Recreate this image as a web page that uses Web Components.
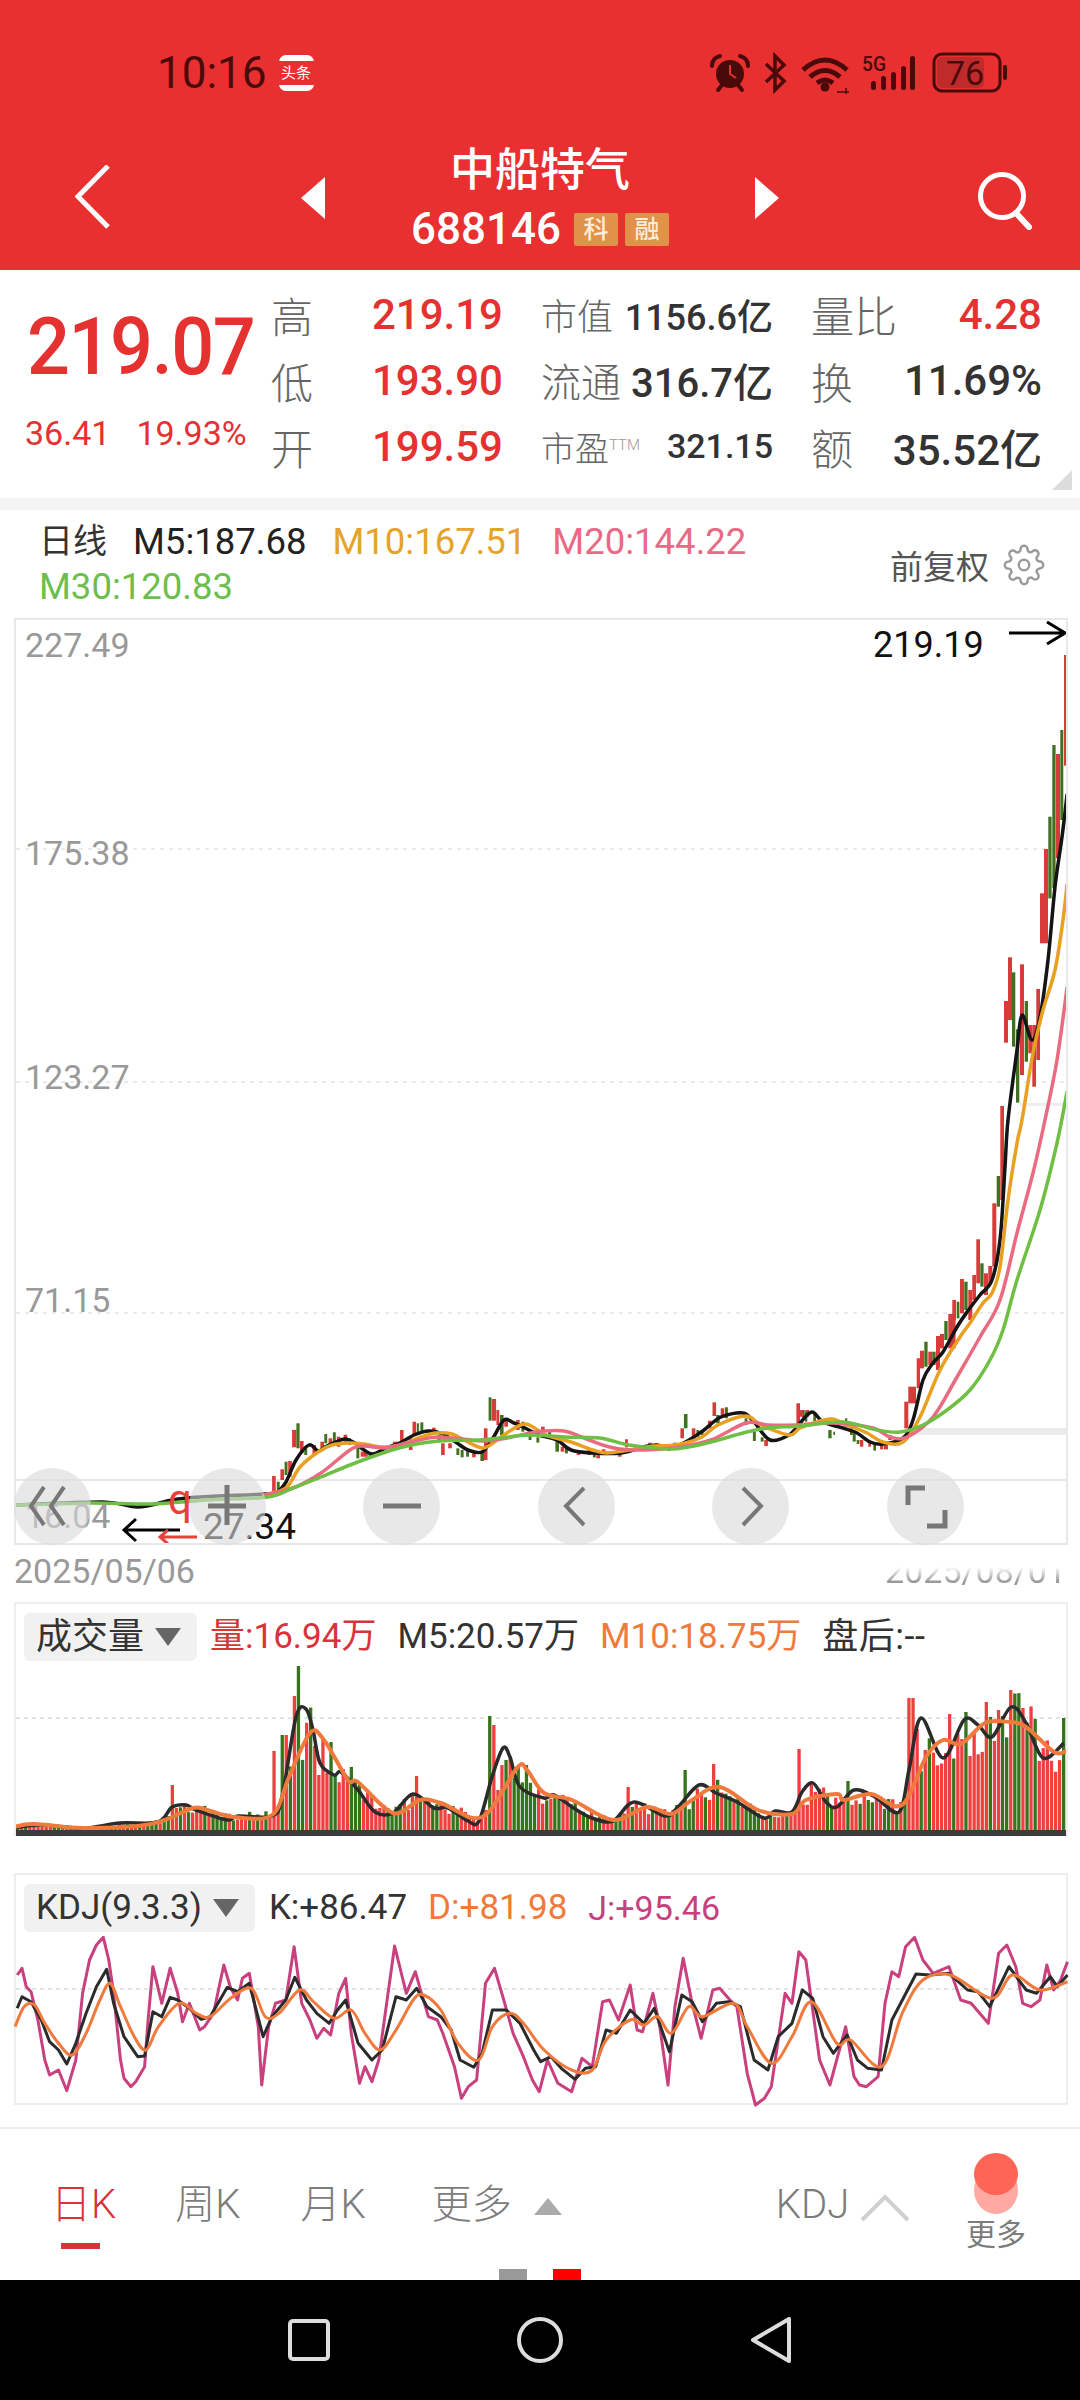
<!DOCTYPE html>
<html lang="zh">
<head>
<meta charset="utf-8">
<title>中船特气</title>
<style>
  html, body { margin: 0; padding: 0; background: #fff; }
  body { width: 1080px; height: 2400px; overflow: hidden; font-family: Roboto, "Noto Sans CJK SC", sans-serif; }
</style>
</head>
<body>
  <stock-header></stock-header>
  <quote-panel></quote-panel>
  <ma-legend></ma-legend>
  <kline-chart></kline-chart>
  <date-axis></date-axis>
  <vol-panel></vol-panel>
  <kdj-panel></kdj-panel>
  <period-tabs></period-tabs>
  <nav-bar></nav-bar>

<script>
// catmull-rom through the points, so the averages don't look like polylines
function curve(pts) {
  let d = `M${pts[0][0]} ${pts[0][1]}`;
  for (let i = 0; i < pts.length - 1; i++) {
    const p0 = pts[i - 1] || pts[i], p1 = pts[i], p2 = pts[i + 1], p3 = pts[i + 2] || p2;
    const c1x = p1[0] + (p2[0] - p0[0]) / 6, c1y = p1[1] + (p2[1] - p0[1]) / 6;
    const c2x = p2[0] - (p3[0] - p1[0]) / 6, c2y = p2[1] - (p3[1] - p1[1]) / 6;
    d += `C${c1x.toFixed(1)} ${c1y.toFixed(1)} ${c2x.toFixed(1)} ${c2y.toFixed(1)} ${p2[0].toFixed(1)} ${p2[1].toFixed(1)}`;
  }
  return d;
}
function yAt(pts, x) {
  for (let i = 0; i < pts.length - 1; i++) {
    if (x <= pts[i + 1][0]) {
      const t = (x - pts[i][0]) / (pts[i + 1][0] - pts[i][0]);
      return pts[i][1] + (pts[i + 1][1] - pts[i][1]) * Math.max(0, t);
    }
  }
  return pts[pts.length - 1][1];
}
function rnd(i) { const s = Math.sin(i * 12.9898 + 4.1) * 43758.5453; return s - Math.floor(s); }

class StockHeader extends HTMLElement {
  constructor() { super(); this.attachShadow({ mode: 'open' }); }
  connectedCallback() {
    this.shadowRoot.innerHTML = `
      <style>
        :host { display: block; height: 270px; background: #e83030; color: #fff; }
        .status { height: 146px; display: flex; align-items: center; padding-left: 157px; box-sizing: border-box; }
        .time { font-size: 44px; color: #4a0a0a; line-height: 50px; }
        .tt { margin-left: 12px; width: 35px; height: 36px; background: #fff; border-radius: 7px; display: flex; align-items: center; }
        .tt span { display: block; width: 100%; height: 24px; background: #e83030; color: #fff; font-size: 15px; line-height: 24px; text-align: center; white-space: nowrap; }
        .sys { margin-left: auto; margin-right: 70px; display: block; }
        .bar { height: 124px; display: grid; grid-template-columns: 1fr 481px 1fr; }
        .left { padding: 19px 0 0 75px; }
        .right { padding: 26px 0 0 0; display: flex; justify-content: flex-end; }
        .mid { display: flex; justify-content: space-between; align-items: flex-start; }
        .mid svg { margin-top: 31px; }
        .stack { display: flex; flex-direction: column; align-items: center; }
        .name { font-size: 45px; font-weight: 500; line-height: 52px; margin-top: -1px; }
        .code { display: flex; align-items: center; margin-top: 8px; height: 48px; font-size: 44px; font-weight: 500; }
        .tag { width: 44px; height: 33px; margin-left: 7px; background: #e09248; color: #ffecd8; font-size: 25px; line-height: 33px; text-align: center; border-radius: 2px; }
        .tag:first-of-type { margin-left: 13px; }
      </style>
      <div class="status">
        <span class="time">10:16</span>
        <span class="tt"><span>头条</span></span>
        <svg class="sys" width="305" height="50" viewBox="703 48 305 50" fill="none" stroke="#4a0a0a">
          <circle cx="728" cy="74" r="14" fill="#4a0a0a" stroke="none"/>
          <path d="M728 65v9l6 4" stroke="#e83030" stroke-width="2"/>
          <path d="M710 66q0-8 8-10M746 66q0-8-8-10" stroke-width="4" stroke-linecap="round"/>
          <path d="M716 90l4-5M740 90l-4-5" stroke-width="4" stroke-linecap="round"/>
          <path d="M764 64L782 81L773 90V56L782 65L764 82" stroke-width="3.500"/>
          <path d="M801 70q22-20 44 0M808 77q15-13 30 0" stroke-width="5"/>
          <path d="M815 83q8-6 16 0" stroke-width="5"/>
          <circle cx="823" cy="87" r="4.500" fill="#4a0a0a" stroke="none"/>
          <path d="M835 92h12M844 88v6" stroke-width="1.500"/>
          <text x="860" y="71" font-size="21" font-weight="500" fill="#4a0a0a" stroke="none" textLength="24" lengthAdjust="spacingAndGlyphs">5G</text>
          <g fill="#4a0a0a" stroke="none">
            <rect x="869" y="81" width="5" height="9" rx="2.500"/><rect x="879" y="76" width="5" height="14" rx="2.500"/>
            <rect x="889" y="72" width="5" height="18" rx="2.500"/><rect x="899" y="66" width="5" height="24" rx="2.500"/>
            <rect x="908" y="56" width="5" height="34" rx="2.500"/>
          </g>
          <rect x="932" y="54" width="66" height="37" rx="8" stroke-width="3"/>
          <rect x="935" y="57" width="47" height="31" rx="5" fill="#bf2a2a" stroke="none"/>
          <rect x="1001" y="65" width="4" height="15" rx="2" fill="#4a0a0a" stroke="none"/>
          <text x="963" y="85" font-size="34" text-anchor="middle" fill="#4a0a0a" stroke="none">76</text>
        </svg>
      </div>
      <div class="bar">
        <div class="left">
          <svg width="36" height="64" viewBox="0 0 36 64" fill="none" stroke="#fff" stroke-width="5"><path d="M33 1L3 31.500L33 62"/></svg>
        </div>
        <div class="mid">
          <svg width="26" height="42" viewBox="0 0 26 42" fill="#fff"><path d="M25 0V42L1 21Z"/></svg>
          <div class="stack">
            <div class="name">中船特气</div>
            <div class="code">688146<span class="tag">科</span><span class="tag">融</span></div>
          </div>
          <svg width="26" height="42" viewBox="0 0 26 42" fill="#fff"><path d="M1 0V42L25 21Z"/></svg>
        </div>
        <div class="right">
          <svg style="margin-right:48px" width="54" height="58" viewBox="0 0 54 58" fill="none" stroke="#fff" stroke-width="5"><circle cx="24" cy="24" r="21.500"/><path d="M38 41L51 55" stroke-linecap="round" stroke-width="6"/></svg>
        </div>
      </div>`;
  }
}

class QuoteCell extends HTMLElement {
  constructor() { super(); this.attachShadow({ mode: 'open' }); }
  connectedCallback() {
    this.shadowRoot.innerHTML = `
      <style>
        :host { display: flex; justify-content: space-between; align-items: center; height: 66px; white-space: nowrap; }
        .lab { color: #666; font-weight: 300; margin-left: -1px; }
        .val { font-weight: 500; color: #333; }
        :host([up]) .val { color: #e5312f; }
      </style>
      <span class="lab"><slot name="label"></slot></span>
      <span class="val"><slot></slot></span>`;
  }
}

class QuotePanel extends HTMLElement {
  constructor() { super(); this.attachShadow({ mode: 'open' }); }
  connectedCallback() {
    this.shadowRoot.innerHTML = `
      <style>
        :host { display: flex; position: relative; box-sizing: border-box; height: 240px; border-bottom: 12px solid #f4f4f4; padding-top: 14px; }
        .price { width: 272px; color: #e5312f; padding-left: 25px; box-sizing: border-box; }
        .big { font-size: 80px; font-weight: 500; line-height: 90px; margin: 18px 0 0 2px; letter-spacing: -1.500px; transform: scaleX(.945); transform-origin: left center; }
        .chg { display: flex; gap: 26px; font-size: 34px; line-height: 44px; margin-top: 19px; }
        .grid { display: grid; grid-template-columns: 231px 231px 230px; grid-auto-rows: 66px; align-content: start; column-gap: 39px; font-size: 42px; margin-top: -3px; }
        .corner { position: absolute; right: 8px; bottom: 8px; width: 0; height: 0; border-left: 20px solid transparent; border-bottom: 20px solid #dcdcdc; }
        sup { font-size: 15px; color: #999; vertical-align: 11px; line-height: 0; }
      </style>
      <div class="price">
        <div class="big">219.07</div>
        <div class="chg"><span>36.41</span><span>19.93%</span></div>
      </div>
      <div class="grid">
        <quote-cell up><span slot="label">高</span>219.19</quote-cell>
        <quote-cell style="font-size:36px"><span slot="label">市值</span>1156.6亿</quote-cell>
        <quote-cell up><span slot="label" style="font-size:43px">量比</span>4.28</quote-cell>
        <quote-cell up><span slot="label">低</span>193.90</quote-cell>
        <quote-cell style="font-size:40px"><span slot="label">流通</span>316.7亿</quote-cell>
        <quote-cell><span slot="label">换</span>11.69%</quote-cell>
        <quote-cell up><span slot="label">开</span>199.59</quote-cell>
        <quote-cell style="font-size:34px"><span slot="label">市盈<sup>TTM</sup></span>321.15</quote-cell>
        <quote-cell><span slot="label">额</span>35.52亿</quote-cell>
      </div>
      <span class="corner"></span>`;
  }
}

class MaLegend extends HTMLElement {
  constructor() { super(); this.attachShadow({ mode: 'open' }); }
  connectedCallback() {
    this.shadowRoot.innerHTML = `
      <style>
        :host { display: flex; justify-content: space-between; align-items: center; height: 108px; box-sizing: border-box; padding: 0 35px 0 39px; font-size: 36.500px; }
        .items { width: 770px; display: flex; flex-wrap: wrap; column-gap: 26px; line-height: 45px; color: #222; }
        .day { font-size: 34px; color: #333; }
        .m10 { color: #e5a32a; } .m20 { color: #e86a85; } .m30 { color: #6cbf4c; }
        .adj { display: flex; align-items: center; gap: 14px; font-size: 33px; color: #555; margin-top: 2px; }
      </style>
      <div class="items">
        <span class="day">日线</span><span>M5:187.68</span><span class="m10">M10:167.51</span><span class="m20">M20:144.22</span><span class="m30">M30:120.83</span>
      </div>
      <div class="adj">
        <span>前复权</span>
        <svg width="42" height="42" viewBox="0 0 24 24" fill="none" stroke="#9a9a9a" stroke-width="1.400"><circle cx="12" cy="12" r="3"/><path d="M19.400 15a1.650 1.650 0 0 0 .33 1.820l.06.06a2 2 0 0 1 0 2.830 2 2 0 0 1-2.830 0l-.06-.06a1.650 1.650 0 0 0-1.820-.33 1.650 1.650 0 0 0-1 1.510V21a2 2 0 0 1-2 2 2 2 0 0 1-2-2v-.09A1.650 1.650 0 0 0 9 19.400a1.650 1.650 0 0 0-1.820.33l-.06.06a2 2 0 0 1-2.830 0 2 2 0 0 1 0-2.830l.06-.06a1.650 1.650 0 0 0 .33-1.820 1.650 1.650 0 0 0-1.510-1H3a2 2 0 0 1-2-2 2 2 0 0 1 2-2h.09A1.650 1.650 0 0 0 4.600 9a1.650 1.650 0 0 0-.33-1.820l-.06-.06a2 2 0 0 1 0-2.830 2 2 0 0 1 2.830 0l.06.06a1.650 1.650 0 0 0 1.820.33H9a1.650 1.650 0 0 0 1-1.510V3a2 2 0 0 1 2-2 2 2 0 0 1 2 2v.09a1.650 1.650 0 0 0 1 1.510 1.650 1.650 0 0 0 1.820-.33l.06-.06a2 2 0 0 1 2.830 0 2 2 0 0 1 0 2.830l-.06.06a1.650 1.650 0 0 0-.33 1.820V9a1.650 1.650 0 0 0 1.510 1H21a2 2 0 0 1 2 2 2 2 0 0 1-2 2h-.09a1.650 1.650 0 0 0-1.510 1z"/></svg>
      </div>`;
  }
}

// moving averages, in page pixels
const M5 = [[14,1505],[103,1502],[138,1507],[172,1500],[200,1497],[265,1494],[277,1492],[286,1482],[296,1460],[309,1445],[318,1451],[325,1447],[336,1442],[345,1439],[355,1443],[364,1450],[373,1454],[386,1448],[400,1443],[414,1435],[429,1431],[443,1434],[457,1443],[468,1450],[482,1452],[493,1438],[504,1420],[514,1423],[525,1428],[539,1435],[557,1440],[571,1450],[593,1453],[621,1453],[643,1447],[657,1445],[671,1448],[689,1440],[704,1430],[721,1417],[743,1413],[754,1422],[770,1440],[789,1435],[800,1423],[812,1412],[823,1422],[843,1428],[857,1433],[870,1442],[883,1444],[903,1438],[913,1420],[923,1380],[933,1363],[943,1352],[957,1327],[967,1312],[980,1295],[992,1280],[1000,1240],[1005,1167],[1008,1120],[1017,1050],[1022,1015],[1032,1040],[1040,1017],[1048,960],[1055,887],[1062,837],[1067,795]];
const M10 = [[264,1495],[286,1488],[300,1467],[318,1452],[332,1445],[350,1443],[364,1444],[382,1447],[400,1445],[421,1437],[436,1433],[452,1434],[464,1440],[482,1448],[493,1443],[504,1435],[525,1424],[546,1435],[571,1442],[593,1450],[607,1453],[629,1450],[654,1446],[675,1445],[700,1438],[718,1425],[746,1416],[761,1425],[789,1435],[800,1428],[817,1422],[832,1419],[847,1425],[867,1433],[883,1442],[903,1442],[920,1417],[940,1370],[960,1337],[970,1323],[983,1303],[992,1293],[1000,1267],[1008,1200],[1017,1143],[1022,1120],[1033,1053],[1043,1010],[1055,970],[1063,920],[1067,885]];
const M20 = [[264,1495],[293,1488],[321,1473],[350,1450],[364,1446],[386,1448],[411,1442],[439,1437],[482,1441],[507,1438],[536,1432],[564,1431],[589,1440],[614,1448],[643,1450],[679,1447],[711,1440],[746,1423],[768,1425],[796,1425],[833,1423],[873,1428],[890,1437],[907,1437],[933,1417],[957,1377],[980,1337],[1000,1300],[1017,1233],[1033,1173],[1045,1120],[1057,1060],[1067,988]];
const M30 = [[14,1505],[90,1503],[152,1504],[207,1500],[268,1497],[293,1488],[321,1477],[350,1465],[386,1452],[411,1445],[439,1441],[479,1440],[500,1438],[529,1435],[564,1437],[600,1438],[629,1445],[671,1449],[707,1443],[743,1433],[768,1428],[800,1426],[843,1422],[877,1430],[900,1432],[923,1425],[947,1410],[970,1390],[990,1360],[1003,1330],[1017,1280],[1040,1210],[1057,1143],[1067,1092]];

// candle bodies read off the crops: [x0, x1, y0, y1, colour]
const R = '#d93a3a', G = '#41701f';
const K_MID = [[62,72,348,395,R],[75,83,365,390,G],[85,95,328,360,R],[97,105,305,345,G],[107,117,303,350,R],[118,130,210,262,R],[130,139,190,265,G],[140,150,243,280,R],[152,160,260,285,G],[175,185,255,285,R],[197,207,245,272,R],[208,216,222,250,G],[220,230,235,260,R],[232,240,217,250,G],[243,253,230,260,R],[262,272,224,250,R],[275,283,235,255,G],[298,306,260,295,G],[310,330,275,290,R],[332,340,280,290,G],[400,420,245,265,R],[420,430,210,260,R],[445,455,235,270,R],[455,465,185,225,R],[467,473,190,220,G],[477,485,187,215,G],[510,520,203,222,R],[525,535,225,245,G],[535,545,250,285,R],[555,565,250,265,R],[578,586,265,285,G],[590,598,270,292,G],[605,613,270,290,G],[622,632,280,292,R],[645,655,275,303,G],[655,665,205,300,R],[668,676,112,182,G],[677,689,117,182,R],[690,698,150,195,R],[700,710,165,225,G],[712,722,180,200,R],[745,755,180,210,R],[760,768,185,215,G],[780,788,225,240,G],[802,810,232,248,G],[815,825,200,230,R],[835,843,215,235,G],[855,865,240,275,G],[870,880,260,275,R],[882,890,260,280,G],[915,925,270,285,R],[945,955,270,285,R],[960,968,275,292,G],[970,980,280,295,R],[985,995,268,280,R],[1030,1040,275,290,R],[1050,1058,238,262,R],[1115,1125,248,262,R],[1168,1178,258,273,G],[1185,1195,248,265,R],[1205,1215,205,235,R],[1215,1225,162,205,G],[1237,1247,205,230,R],[1250,1258,210,230,G],[1262,1270,210,225,G],[1282,1292,182,205,R],[1295,1305,127,168,R],[1305,1315,165,190,G],[1318,1328,145,172,R],[1330,1338,142,175,G],[1385,1393,175,195,G],[1408,1416,215,243,G],[1430,1438,232,245,G],[1440,1450,240,258,R],[1530,1540,130,195,R],[1545,1553,150,172,G],[1555,1565,150,170,R]];
const K_LOW = [[0,10,930,950,R],[15,22,935,965,G],[40,48,940,965,G],[85,95,990,1015,G],[100,105,995,1005,G],[135,142,955,980,G],[150,158,980,1005,G],[158,167,1000,1025,G],[170,178,1020,1032,G],[180,190,1020,1040,R],[205,213,1020,1040,R],[220,228,1030,1052,G],[240,250,1032,1048,R],[252,264,1025,1048,R],[265,275,1005,1020,R],[285,295,1015,1025,R],[313,325,905,985,R],[325,348,860,910,R],[350,360,775,865,R],[360,372,752,805,R],[373,383,725,800,G],[385,397,755,795,R],[397,407,755,795,G],[408,420,708,810,R],[420,432,702,745,R],[433,443,663,720,G],[445,467,642,745,R],[457,468,600,660,R],[470,478,605,655,G],[480,492,537,640,R],[493,503,545,630,G],[505,517,570,660,R],[517,528,525,600,R],[529,540,418,550,R],[541,551,490,560,G],[552,564,520,585,R],[565,577,498,550,R],[577,589,310,500,R],[590,600,228,320,G],[601,612,18,300,R]];
const K_TOP = [[612,624,1143,1268,R],[624,636,1012,1200,R],[636,646,1057,1280,G],[648,658,1228,1448,G],[660,672,1033,1365,R],[674,684,1143,1325,G],[685,697,1215,1300,R],[697,708,1215,1400,R],[709,720,1107,1320,R],[720,744,820,970,R],[732,744,687,830,R],[745,755,590,835,G],[757,767,375,805,G],[768,780,402,715,R],[781,790,330,600,G],[792,804,105,437,R]];

class KlineChart extends HTMLElement {
  constructor() { super(); this.attachShadow({ mode: 'open' }); }
  connectedCallback() {
    const rect = (x0, x1, y0, y1, c) => `<rect x="${x0.toFixed(1)}" y="${y0.toFixed(1)}" width="${(x1 - x0).toFixed(1)}" height="${(y1 - y0).toFixed(1)}" fill="${c}"/>`;
    const candles =
      K_MID.map(k => rect(250 + k[0] / 2.8, 250 + k[1] / 2.8, 1360 + k[2] / 3, 1360 + k[3] / 3, k[4])).join('') +
      K_LOW.map(k => rect(800 + k[0] / 3, 800 + k[1] / 3, 1100 + k[2] / 3, 1100 + k[3] / 3, k[4])).join('') +
      K_TOP.map(k => rect(800 + k[0] / 3, 800 + k[1] / 3, 620 + k[2] / 3, 620 + k[3] / 3, k[4])).join('');
    const line = (p, c) => `<path d="${curve(p)}" stroke="${c}"/>`;
    this.shadowRoot.innerHTML = `
      <style>
        :host { display: block; position: relative; box-sizing: border-box; height: 927px; margin: 0 12px 0 14px; border: 2px solid #e8e8e8; }
        svg.plot { display: block; width: 100%; height: 100%; }
        .lab { position: absolute; left: 9px; font-size: 34px; line-height: 40px; color: #999; }
        .q { position: absolute; left: 152px; top: 860px; font-size: 42px; line-height: 40px; color: #e8413a; }
        .hi { position: absolute; left: 857px; top: 3px; font-size: 36px; line-height: 44px; color: #111; }
        .lo { position: absolute; left: 187px; top: 885px; font-size: 37px; line-height: 44px; color: #111; }
        .tools { position: absolute; left: -2px; bottom: -2px; width: 950px; display: flex; justify-content: space-between; }
      </style>
      <svg class="plot" viewBox="16 620 1050 923">
        <g stroke="#e4e4e4" stroke-width="1.500" stroke-dasharray="4 5">
          <path d="M16 849H1066M16 1082H1066M16 1313H1066"/>
        </g>
        <path d="M16 1480H1066" stroke="#e8e8e8" stroke-width="2"/>
        <rect x="913" y="1428" width="153" height="7" fill="#ebebeb"/>
        <rect x="1020" y="1103" width="46" height="3" fill="#eee"/>
        ${candles}
        <g fill="none" stroke-width="3.500" stroke-linejoin="round" stroke-linecap="round">
          ${line(M5, '#141414')}${line(M10, '#e8a020')}${line(M20, '#ea6a80')}${line(M30, '#6fbf44')}
        </g>
        <g fill="none" stroke="#000" stroke-width="3">
          <path d="M1009 633H1065M1047 622L1065 633L1047 644"/>
          <path d="M180 1530H124M136 1519L124 1530L136 1541"/>
        </g>
        <path d="M197 1537H160M168 1530L160 1537L168 1544" fill="none" stroke="#e8413a" stroke-width="3"/>
      </svg>
      <span class="lab" style="top:5px">227.49</span>
      <span class="lab" style="top:213px">175.38</span>
      <span class="lab" style="top:437px">123.27</span>
      <span class="lab" style="top:660px">71.15</span>
      <span class="lab" style="top:876px">16.04</span>
      <span class="q">q</span>
      <span class="hi">219.19</span>
      <span class="lo">27.34</span>
      <div class="tools">
        <chart-tool><path d="M30 19L17 38L30 57M50 19L37 38L50 57"/></chart-tool>
        <chart-tool wide><path d="M19 38H57M38 17V57"/></chart-tool>
        <chart-tool wide><path d="M20 38H58"/></chart-tool>
        <chart-tool><path d="M46 20L28 38L46 57"/></chart-tool>
        <chart-tool><path d="M31 20L49 38L31 57"/></chart-tool>
        <chart-tool wide><path d="M21 37V20H38M58 42V58H40"/></chart-tool>
      </div>`;
  }
}

class ChartTool extends HTMLElement {
  constructor() { super(); this.attachShadow({ mode: 'open' }); }
  connectedCallback() {
    const sw = this.hasAttribute('wide') ? 5 : 4;
    this.shadowRoot.innerHTML = `
      <style>
        :host { display: block; width: 77px; height: 77px; border-radius: 50%; background: rgba(217,217,217,.6); }
        svg { display: block; }
      </style>
      <svg width="77" height="77" viewBox="0 0 77 77" fill="none" stroke="#777" stroke-width="${sw}">${this.innerHTML}</svg>`;
  }
}

class DateAxis extends HTMLElement {
  constructor() { super(); this.attachShadow({ mode: 'open' }); }
  connectedCallback() {
    this.shadowRoot.innerHTML = `
      <style>
        :host { display: flex; justify-content: space-between; height: 57px; box-sizing: border-box; padding: 4px 14px 0; font-size: 34px; line-height: 44px; color: #999; }
        .end { -webkit-mask-image: linear-gradient(to bottom, transparent 34%, #000 62%); mask-image: linear-gradient(to bottom, transparent 34%, #000 62%); }
      </style>
      <span>2025/05/06</span>
      <span class="end">2025/08/01</span>`;
  }
}

class PanelChip extends HTMLElement {
  constructor() { super(); this.attachShadow({ mode: 'open' }); }
  connectedCallback() {
    this.shadowRoot.innerHTML = `
      <style>
        :host { display: inline-flex; align-items: center; height: 48px; box-sizing: border-box; padding: 0 16px 0 12px; background: #f1f1f1; border-radius: 6px; font-size: 36px; color: #333; white-space: nowrap; }
        i { display: block; width: 0; height: 0; margin-left: 11px; border-left: 13px solid transparent; border-right: 13px solid transparent; border-top: 18px solid #666; }
      </style>
      <slot></slot><i></i>`;
  }
}

const VOL_M5 = [[14,1828],[41,1825],[83,1828],[120,1823],[158,1822],[172,1807],[186,1805],[196,1810],[227,1820],[238,1816],[272,1816],[282,1797],[296,1717],[306,1709],[313,1730],[320,1763],[334,1775],[341,1772],[358,1790],[375,1812],[393,1813],[413,1794],[434,1808],[448,1808],[468,1821],[479,1821],[492,1777],[503,1748],[510,1757],[520,1787],[544,1798],[554,1795],[572,1807],[592,1818],[613,1821],[634,1802],[665,1816],[678,1807],[699,1785],[716,1793],[737,1802],[764,1818],[775,1811],[792,1812],[802,1792],[813,1783],[826,1802],[837,1807],[854,1790],[875,1797],[899,1812],[909,1770],[921,1718],[943,1758],[964,1720],[978,1725],[992,1737],[1011,1707],[1026,1723],[1043,1758],[1064,1743]];
const VOL_M10 = [[14,1827],[34,1824],[83,1828],[138,1826],[165,1820],[193,1808],[207,1810],[234,1817],[272,1815],[289,1777],[310,1733],[324,1740],[348,1780],[358,1782],[393,1813],[420,1800],[441,1803],[482,1817],[517,1768],[527,1770],[544,1793],[572,1800],[613,1820],[647,1807],[671,1814],[692,1800],[720,1787],[758,1810],[792,1814],[806,1800],[837,1794],[844,1800],[871,1794],[902,1805],[926,1757],[943,1740],[961,1744],[985,1723],[1009,1722],[1026,1727],[1054,1752],[1066,1751]];
const VOL_SPIKES = [[298,1666,'g'],[293,1696,'r'],[274,1751,'r'],[280,1735,'g'],[286,1735,'r'],[490,1716,'g'],[494,1725,'r'],[169,1785,'r'],[413,1776,'r'],[625,1787,'r'],[797,1749,'r'],[845,1781,'g'],[713,1764,'r'],[685,1770,'g'],[908,1698,'r'],[912,1698,'r'],[916,1729,'r'],[1009,1690,'r'],[1062,1718,'g'],[950,1714,'r'],[966,1712,'g'],[995,1710,'r'],[1001,1716,'g'],[318,1775,'r'],[334,1775,'g']];

class VolPanel extends HTMLElement {
  constructor() { super(); this.attachShadow({ mode: 'open' }); }
  connectedCallback() {
    const spike = {};
    VOL_SPIKES.forEach(s => { spike[Math.round((s[0] - 16) / 4.07)] = s; });
    let bars = '';
    for (let i = 0; i < 258; i++) {
      const x = 16 + i * 4.07;
      const base = 1833 - (yAt(VOL_M5, x) + yAt(VOL_M10, x)) / 2;
      let top = 1833 - base * (0.72 + 0.55 * rnd(i));
      let red = x > 905 ? rnd(i + 500) < 0.72 : rnd(i + 500) < 0.5;
      if (spike[i]) { top = spike[i][1]; red = spike[i][2] === 'r'; }
      bars += `<rect x="${x.toFixed(1)}" y="${top.toFixed(1)}" width="3.300" height="${(1833 - top).toFixed(1)}" fill="${red ? '#f03f3f' : '#35741a'}"/>`;
    }
    this.shadowRoot.innerHTML = `
      <style>
        :host { display: block; box-sizing: border-box; height: 234px; margin: 0 12px 0 14px; border: 2px solid #eee; border-bottom: 0; }
        .head { display: flex; align-items: center; gap: 21px; height: 48px; margin-top: 9px; padding-left: 8px; font-size: 35px; line-height: 48px; color: #333; white-space: nowrap; }
        panel-chip { margin-right: -8px; }
        .up { color: #d8333a; } .m10 { color: #ef7a3c; }
        .late { font-size: 36px; letter-spacing: .5px; }
        svg { display: block; margin-top: 3px; }
      </style>
      <div class="head">
        <panel-chip>成交量</panel-chip>
        <span class="up">量:16.94万</span><span>M5:20.57万</span><span class="m10">M10:18.75万</span><span class="late">盘后:--</span>
      </div>
      <svg width="1050" height="172" viewBox="16 1664 1050 172">
        <path d="M16 1718H1066" stroke="#dcdcdc" stroke-width="1.500" stroke-dasharray="4 4"/>
        ${bars}
        <rect x="16" y="1830" width="1050" height="6" fill="#3c3c3c"/>
        <g fill="none" stroke-linejoin="round">
          <path d="${curve(VOL_M5)}" stroke="#2b2b2b" stroke-width="3.500"/>
          <path d="${curve(VOL_M10)}" stroke="#ef7a3c" stroke-width="4"/>
        </g>
      </svg>`;
  }
}

// kdj lines as read from the crop, x scaled by 1.452, y by 3
const KDJ_J = [25,345,32,325,38,380,45,395,55,480,65,600,72,645,85,630,97,692,110,600,120,400,130,300,140,255,150,232,158,300,165,400,175,600,180,655,190,680,197,665,210,620,215,480,222,320,235,430,247,325,258,400,265,485,275,430,290,510,297,500,310,460,325,315,335,385,345,420,352,355,362,340,375,500,380,675,390,500,400,430,415,420,427,260,438,430,450,480,460,535,470,505,480,525,492,400,502,355,510,520,522,670,530,620,540,665,550,600,573,258,590,400,603,335,612,400,622,470,635,480,643,520,660,620,670,715,680,680,692,660,705,370,718,325,730,410,745,520,760,590,773,660,783,695,795,600,810,670,830,695,845,595,860,620,875,425,885,420,898,480,915,375,925,510,933,515,948,400,958,500,970,675,980,440,992,295,1005,430,1018,535,1035,390,1045,385,1060,420,1070,440,1085,640,1097,735,1110,715,1120,680,1140,400,1150,430,1160,275,1170,300,1180,450,1190,600,1205,675,1228,500,1240,650,1248,675,1258,680,1275,650,1285,430,1295,335,1305,350,1315,260,1328,232,1340,300,1355,340,1378,320,1395,420,1410,430,1435,490,1450,280,1462,255,1475,320,1485,430,1497,440,1510,420,1520,315,1530,390,1540,360,1550,305];
const KDJ_K = [25,445,32,410,45,425,60,480,72,545,85,570,97,612,110,550,125,460,140,380,155,328,165,430,180,530,200,590,210,588,222,455,235,470,247,412,258,420,275,445,292,478,305,470,330,382,345,395,362,370,382,530,395,470,415,420,428,352,445,420,460,460,478,490,490,450,502,420,520,550,540,600,555,570,575,410,590,420,605,385,620,440,640,470,655,510,668,600,688,622,700,580,715,450,735,450,755,490,775,570,785,605,800,590,815,625,835,658,850,625,865,620,880,510,895,520,915,450,935,490,950,445,972,575,990,405,1005,425,1020,485,1040,430,1058,425,1075,440,1095,600,1115,630,1130,530,1150,490,1165,390,1180,415,1195,530,1210,580,1230,525,1245,600,1260,625,1280,630,1295,480,1330,342,1350,345,1378,340,1405,390,1420,395,1437,440,1465,320,1490,390,1505,400,1525,350,1535,380,1550,345];
const KDJ_D = [22,500,35,440,50,435,65,490,85,550,105,585,125,520,145,420,160,370,175,440,195,530,212,570,230,500,260,430,285,460,305,470,335,415,365,385,385,470,405,460,435,390,455,425,485,475,510,450,530,520,552,570,575,510,600,420,615,405,640,450,665,550,695,600,715,500,740,460,760,490,790,570,830,630,860,630,880,540,915,480,935,495,955,470,975,520,1000,440,1020,470,1065,430,1085,500,1120,610,1150,530,1178,425,1215,550,1235,540,1280,620,1310,460,1340,360,1380,345,1440,415,1470,345,1510,390,1550,365];

class KdjPanel extends HTMLElement {
  constructor() { super(); this.attachShadow({ mode: 'open' }); }
  connectedCallback() {
    const pts = a => { const o = []; for (let i = 0; i < a.length; i += 2) o.push([a[i] / 1.452, 1860 + a[i + 1] / 3]); return o; };
    const poly = a => pts(a).map(p => p[0].toFixed(1) + ',' + p[1].toFixed(1)).join(' ');
    this.shadowRoot.innerHTML = `
      <style>
        :host { display: block; box-sizing: border-box; height: 232px; margin: 37px 12px 0 14px; border: 2px solid #eee; }
        .head { display: flex; align-items: center; gap: 21px; height: 48px; margin-top: 9px; padding-left: 8px; font-size: 35px; line-height: 48px; color: #333; white-space: nowrap; }
        panel-chip { margin-right: -7px; }
        .d { color: #ef7a3c; } .j { color: #c9407f; font-size: 34px; }
        svg { display: block; margin-top: 3px; overflow: visible; }
      </style>
      <div class="head">
        <panel-chip style="font-size:35px">KDJ(9.3.3)</panel-chip>
        <span>K:+86.47</span><span class="d">D:+81.98</span><span class="j">J:+95.46</span>
      </div>
      <svg width="1050" height="168" viewBox="16 1935 1050 168">
        <path d="M16 1989H1066" stroke="#dcdcdc" stroke-width="1.500" stroke-dasharray="4 4"/>
        <g fill="none" stroke-linejoin="round">
          <polyline points="${poly(KDJ_J)}" stroke="#c9407f" stroke-width="3"/>
          <polyline points="${poly(KDJ_K)}" stroke="#2b2b2b" stroke-width="3"/>
          <path d="${curve(pts(KDJ_D))}" stroke="#ef7a3c" stroke-width="3"/>
        </g>
      </svg>`;
  }
}

class PeriodTabs extends HTMLElement {
  constructor() { super(); this.attachShadow({ mode: 'open' }); }
  connectedCallback() {
    this.shadowRoot.innerHTML = `
      <style>
        :host { display: block; box-sizing: border-box; height: 153px; margin-top: 22px; border-top: 2px solid #eee; font-size: 40px; color: #7c7c7c; overflow: hidden; }
        .row { height: 140px; box-sizing: border-box; display: flex; align-items: flex-start; padding: 24px 54px 0 51px; }
        .tab { position: relative; margin-top: 27px; line-height: 50px; white-space: nowrap; font-weight: 300; }
        .on { color: #d8333a; }
        .on::after { content: ""; position: absolute; left: 10px; top: 63px; width: 39px; height: 6px; background: #d8333a; }
        .more { display: flex; flex-direction: column; align-items: center; font-size: 30px; line-height: 34px; margin-left: auto; }
        .more svg { display: block; margin-bottom: 3px; }
        .tri { margin: 45px 0 0 22px; width: 0; height: 0; border-left: 14px solid transparent; border-right: 14px solid transparent; border-bottom: 17px solid #aaa; }
        .dots { display: flex; justify-content: center; gap: 26px; height: 11px; }
        .dots b { width: 28px; height: 14px; background: #999; }
        .dots b + b { background: #f00; }
      </style>
      <div class="row">
        <span class="tab on">日K</span>
        <span class="tab" style="margin-left:59px">周K</span>
        <span class="tab" style="margin-left:60px">月K</span>
        <span class="tab" style="margin-left:66px">更多</span>
        <span class="tri"></span>
        <span class="tab" style="margin-left:214px">KDJ</span>
        <svg style="margin:41px 0 0 10px" width="52" height="28" viewBox="0 0 52 28" fill="none" stroke="#d0d0d0" stroke-width="4"><path d="M3 26L26 3L49 26"/></svg>
        <div class="more">
          <svg width="44" height="62" viewBox="0 0 44 62"><ellipse cx="22" cy="37" rx="22" ry="24" fill="#ffa9a2"/><ellipse cx="22" cy="21" rx="22" ry="21" fill="#ff6557"/></svg>
          <span>更多</span>
        </div>
      </div>
      <div class="dots"><b></b><b></b></div>`;
  }
}

class NavBar extends HTMLElement {
  constructor() { super(); this.attachShadow({ mode: 'open' }); }
  connectedCallback() {
    this.shadowRoot.innerHTML = `
      <style>
        :host { display: flex; justify-content: center; align-items: center; gap: 187px; height: 120px; background: #000; }
      </style>
      <svg width="42" height="42" viewBox="0 0 42 42" fill="none" stroke="#ddd" stroke-width="4"><rect x="2" y="2" width="38" height="38" rx="3"/></svg>
      <svg width="46" height="46" viewBox="0 0 46 46" fill="none" stroke="#ddd" stroke-width="4"><circle cx="23" cy="23" r="21"/></svg>
      <svg width="42" height="46" viewBox="0 0 42 46" fill="none" stroke="#ddd" stroke-width="4" stroke-linejoin="round"><path d="M39 2V44L3 23Z"/></svg>`;
  }
}

customElements.define('quote-cell', QuoteCell);
customElements.define('chart-tool', ChartTool);
customElements.define('panel-chip', PanelChip);
customElements.define('stock-header', StockHeader);
customElements.define('quote-panel', QuotePanel);
customElements.define('ma-legend', MaLegend);
customElements.define('kline-chart', KlineChart);
customElements.define('date-axis', DateAxis);
customElements.define('vol-panel', VolPanel);
customElements.define('kdj-panel', KdjPanel);
customElements.define('period-tabs', PeriodTabs);
customElements.define('nav-bar', NavBar);
</script>
</body>
</html>
